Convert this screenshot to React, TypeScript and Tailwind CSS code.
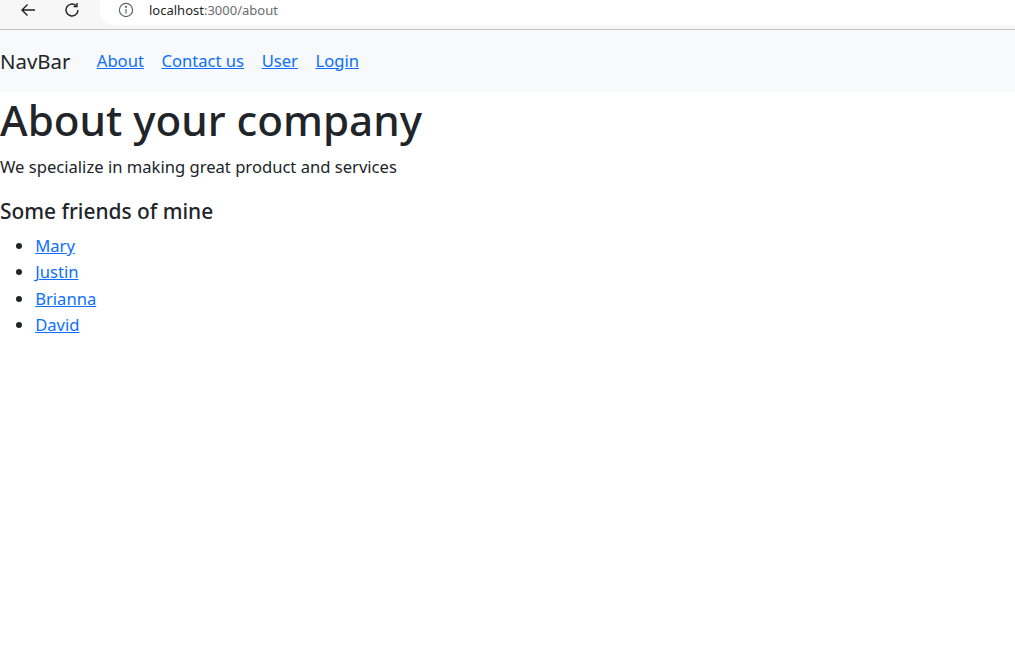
import React from "react";

const font = { fontFamily: '"Noto Sans", "Open Sans", sans-serif' };

function Chrome() {
  return (
    <div className="h-[30px] bg-[#f7f7f7] border-b border-[#c4c4c4] flex items-start relative">
      <div className="w-[100px] h-[20px] flex items-center">
        <svg className="ml-[19px]" width="18" height="18" viewBox="0 0 18 18" fill="none" stroke="#1f1f1f" strokeWidth="1.4">
          <path d="M16 9H3M8.5 3.5 3 9l5.5 5.5" />
        </svg>
        <svg className="ml-[26px]" width="18" height="18" viewBox="0 0 18 18" fill="none" stroke="#1f1f1f" strokeWidth="1.4">
          <path d="M15 9a6 6 0 1 1-2-4.5" />
          <path d="M14 2v3.5h-3.5" />
        </svg>
      </div>
      <div className="flex-1 h-[25px] bg-white rounded-bl-[14px] flex items-start pt-[2px]">
        <svg className="ml-[18px]" width="16" height="16" viewBox="0 0 16 16" fill="none" stroke="#5f6368" strokeWidth="1.2">
          <circle cx="8" cy="8" r="6.6" />
          <path d="M8 7v4.5" />
          <circle cx="8" cy="4.8" r="0.5" fill="#5f6368" />
        </svg>
        <span className="ml-[15px] text-[13px] leading-[16px]" style={{ fontFamily: '"Noto Sans", sans-serif' }}>
          <span className="text-[#1f1f1f]">localhost</span>
          <span className="text-[#6b6b6b]">:3000/about</span>
        </span>
      </div>
    </div>
  );
}

export default function App() {
  return (
    <div className="w-[1015px] h-[664px] bg-white text-[#212529] overflow-hidden" style={font}>
      <Chrome />
      <nav className="h-[62px] bg-[#f8f9fa] flex items-center">
        <span className="text-[20.4px] leading-[33px] mr-[17.6px]">NavBar</span>
        <a href="#" className="text-[16.6px] leading-[26.4px] px-[8.8px] text-[#0d6efd] underline">About</a>
        <a href="#" className="text-[16.6px] leading-[26.4px] px-[8.8px] text-[#0d6efd] underline">Contact us</a>
        <a href="#" className="text-[16.6px] leading-[26.4px] px-[8.8px] text-[#0d6efd] underline">User</a>
        <a href="#" className="text-[16.6px] leading-[26.4px] px-[8.8px] text-[#0d6efd] underline">Login</a>
      </nav>
      <h1 className="text-[42.2px] leading-[52.8px] font-medium pt-[2px] mb-[6.8px]">About your company</h1>
      <p className="text-[16.6px] leading-[26.4px] mb-[17.6px]">We specialize in making great product and services</p>
      <h5 className="text-[20.9px] leading-[26.4px] font-medium mb-[8.8px]">Some friends of mine</h5>
      <ul className="list-disc pl-[35.2px] text-[16.6px] leading-[26.4px]">
        <li><a href="#" className="text-[#0d6efd] underline">Mary</a></li>
        <li><a href="#" className="text-[#0d6efd] underline">Justin</a></li>
        <li><a href="#" className="text-[#0d6efd] underline">Brianna</a></li>
        <li><a href="#" className="text-[#0d6efd] underline">David</a></li>
      </ul>
    </div>
  );
}
